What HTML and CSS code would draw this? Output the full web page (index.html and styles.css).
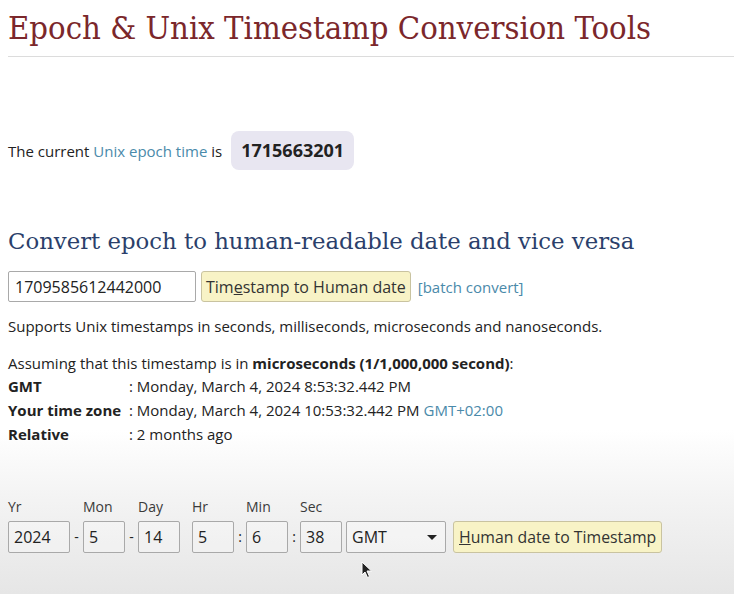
FILE: index.html
```html
<!DOCTYPE html>
<html>
<head>
<meta charset="utf-8">
<link rel="stylesheet" href="styles.css">
</head>
<body>
<h1 class="title">Epoch &amp; Unix Timestamp Conversion Tools</h1>

<div class="now">
  <span>The current <a class="link" href="#">Unix epoch time</a> is</span>
  <span class="badge">1715663201</span>
</div>

<h2 class="subtitle">Convert epoch to human-readable date and vice versa</h2>

<div class="convert-row">
  <div class="field ts-field">1709585612442000</div>
  <button class="btn">Tim<u>e</u>stamp to Human date</button>
  <a class="link batch" href="#">[batch convert]</a>
</div>

<p class="note">Supports Unix timestamps in seconds, milliseconds, microseconds and nanoseconds.</p>

<div class="result">
  <p class="assume">Assuming that this timestamp is in <b>microseconds (1/1,000,000 second)</b>:</p>
  <div class="result-grid">
    <b>GMT</b><span>: Monday, March 4, 2024 8:53:32.442 PM</span>
    <b>Your time zone</b><span>: Monday, March 4, 2024 10:53:32.442 PM <span class="link">GMT+02:00</span></span>
    <b>Relative</b><span>: 2 months ago</span>
  </div>
</div>

<div class="date-form">
  <div class="col"><span class="lbl">Yr</span><div class="field yr">2024</div></div>
  <span class="sep wide">-</span>
  <div class="col"><span class="lbl">Mon</span><div class="field sm">5</div></div>
  <span class="sep wide">-</span>
  <div class="col"><span class="lbl">Day</span><div class="field sm">14</div></div>
  <span class="sep"></span>
  <div class="col"><span class="lbl">Hr</span><div class="field sm">5</div></div>
  <span class="sep">:</span>
  <div class="col"><span class="lbl">Min</span><div class="field sm">6</div></div>
  <span class="sep">:</span>
  <div class="col"><span class="lbl">Sec</span><div class="field sm">38</div></div>
  <div class="select"><span>GMT</span><span class="caret"></span></div>
  <button class="btn btn2"><u>H</u>uman date to Timestamp</button>
</div>

<svg class="cursor" width="12" height="18" viewBox="0 0 12 18"><path d="M1 1 L1 14 L4 11 L6.5 16.5 L8.5 15.5 L6 10 L10.5 10 Z" fill="#222" stroke="#fff" stroke-width="1"/></svg>
</body>
</html>
```

FILE: styles.css
```css
html, body {
  margin: 0;
  padding: 0;
}
body {
  width: 734px;
  height: 594px;
  overflow: hidden;
  position: relative;
  padding: 0 0 0 8px;
  box-sizing: border-box;
  font-family: "Open Sans", "DejaVu Sans", sans-serif;
  font-size: 15px;
  color: #222;
  background: linear-gradient(to bottom, #ffffff 0px, #ffffff 430px, #f3f3f3 500px, #e6e6e6 594px);
}
.title {
  margin: 0;
  padding: 8px 0 8px;
  font-family: "DejaVu Serif Condensed", "DejaVu Serif", serif;
  font-weight: normal;
  font-size: 32.5px;
  line-height: 40px;
  color: #7b272b;
  border-bottom: 1px solid #dcdcdc;
  white-space: nowrap;
}
.link {
  color: #4a8aaa;
  text-decoration: none;
}
.now {
  display: flex;
  align-items: center;
  gap: 9px;
  margin-top: 74px;
}
.badge {
  background: #e8e6f1;
  border-radius: 8px;
  padding: 0 10px;
  height: 39px;
  line-height: 39px;
  font-weight: bold;
  font-size: 18px;
  color: #222;
}
.subtitle {
  margin: 56px 0 0;
  font-family: "DejaVu Serif", serif;
  font-weight: normal;
  font-size: 22.8px;
  line-height: 30px;
  color: #2b3f6b;
  white-space: nowrap;
}
.convert-row {
  display: flex;
  align-items: center;
  margin-top: 15px;
  height: 31px;
}
.field {
  box-sizing: border-box;
  border: 1px solid #a9a9a9;
  border-radius: 2px;
  font-size: 16px;
  color: #222;
  display: flex;
  align-items: center;
  padding: 0 6px;
}
.ts-field {
  width: 188px;
  height: 31px;
  background: #fff;
}
.btn {
  box-sizing: border-box;
  height: 31px;
  margin-left: 5px;
  padding: 0 4px;
  background: #f8f3c6;
  border: 1px solid #c9c3a0;
  border-radius: 3px;
  font-family: "Open Sans", "DejaVu Sans", sans-serif;
  font-size: 16px;
  color: #333;
}
.batch {
  margin-left: 7px;
  font-size: 15px;
}
.note {
  margin: 14px 0 0;
  line-height: 20px;
}
.result {
  margin-top: 16px;
}
.assume {
  margin: 0;
  line-height: 22px;
}
.result-grid {
  display: grid;
  grid-template-columns: 121px auto;
  grid-auto-rows: 24px;
  align-items: center;
}
.date-form {
  display: flex;
  align-items: flex-end;
  margin-top: 52px;
}
.col {
  display: flex;
  flex-direction: column;
  gap: 5px;
}
.lbl {
  font-size: 14px;
  line-height: 18px;
  color: #3a3a3a;
}
.date-form .field {
  height: 32px;
  background: rgba(255,255,255,0.25);
  padding: 0 5px;
}
.yr { width: 62px; }
.sm { width: 42px; }
.sep {
  width: 12px;
  height: 32px;
  line-height: 32px;
  text-align: center;
  font-size: 14px;
}
.sep.wide {
  width: 13px;
}
.select {
  box-sizing: border-box;
  width: 100px;
  height: 32px;
  margin-left: 4px;
  border: 1px solid #a9a9a9;
  border-radius: 2px;
  background: rgba(255,255,255,0.35);
  display: flex;
  align-items: center;
  justify-content: space-between;
  padding: 0 8px 0 5px;
  font-size: 16px;
}
.caret {
  width: 0;
  height: 0;
  border-left: 5px solid transparent;
  border-right: 5px solid transparent;
  border-top: 5px solid #222;
}
.btn2 {
  height: 32px;
  margin-left: 7px;
  padding: 0 5px;
  font-size: 15.8px;
}
.cursor {
  position: absolute;
  left: 361px;
  top: 561px;
}
```
